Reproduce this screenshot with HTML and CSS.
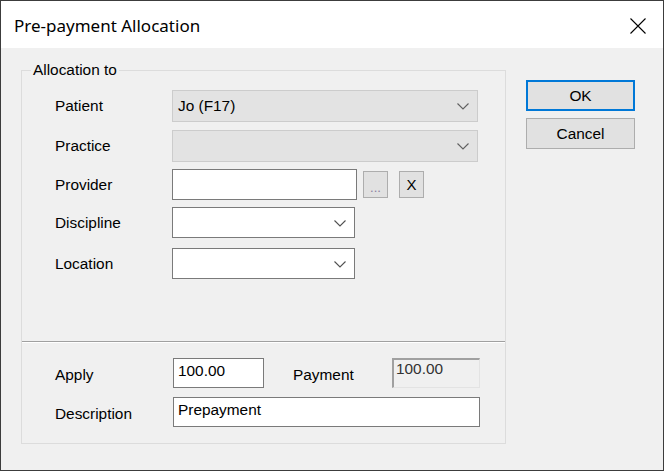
FILE: index.html
```html
<!DOCTYPE html>
<html>
<head>
<meta charset="utf-8">
<link rel="stylesheet" href="styles.css">
</head>
<body>
<div class="window">
  <div class="titlebar">
    <span class="title">Pre-payment Allocation</span>
    <span class="close">
      <svg width="16" height="16" viewBox="0 0 16 16"><path d="M0.5 0.5 L15.5 15.5 M15.5 0.5 L0.5 15.5" stroke="#000" stroke-width="1.1" fill="none"/></svg>
    </span>
  </div>
  <div class="client">
    <div class="group">
      <div class="legend">Allocation to</div>
      <div class="top">
        <div class="row r1">
          <span class="label">Patient</span>
          <div class="combo disabled wide"><span class="value">Jo (F17)</span><svg class="chev" width="12" height="7" viewBox="0 0 12 7"><polyline points="0.5,0.5 6,6 11.5,0.5" fill="none" stroke="#606060" stroke-width="1.1"/></svg></div>
        </div>
        <div class="row r2">
          <span class="label">Practice</span>
          <div class="combo disabled wide"><span class="value"></span><svg class="chev" width="12" height="7" viewBox="0 0 12 7"><polyline points="0.5,0.5 6,6 11.5,0.5" fill="none" stroke="#606060" stroke-width="1.1"/></svg></div>
        </div>
        <div class="row r3">
          <span class="label">Provider</span>
          <div class="textbox provider"></div>
          <span class="smallbtn dots">...</span>
          <span class="smallbtn clear">X</span>
        </div>
        <div class="row r4">
          <span class="label">Discipline</span>
          <div class="combo narrow"><span class="value"></span><svg class="chev" width="12" height="7" viewBox="0 0 12 7"><polyline points="0.5,0.5 6,6 11.5,0.5" fill="none" stroke="#505050" stroke-width="1.1"/></svg></div>
        </div>
        <div class="row r5">
          <span class="label">Location</span>
          <div class="combo narrow"><span class="value"></span><svg class="chev" width="12" height="7" viewBox="0 0 12 7"><polyline points="0.5,0.5 6,6 11.5,0.5" fill="none" stroke="#505050" stroke-width="1.1"/></svg></div>
        </div>
      </div>
      <div class="sep"></div>
      <div class="bottom">
        <div class="brow">
          <span class="label blabel">Apply</span>
          <div class="textbox apply">100.00</div>
          <span class="label plabel">Payment</span>
          <div class="readonly">100.00</div>
        </div>
        <div class="brow">
          <span class="label blabel">Description</span>
          <div class="textbox desc">Prepayment</div>
        </div>
      </div>
    </div>
    <div class="buttons">
      <div class="btn default">OK</div>
      <div class="btn">Cancel</div>
    </div>
  </div>
</div>
</body>
</html>
```
FILE: styles.css
```css
* { box-sizing: border-box; }
html, body { margin: 0; padding: 0; }
body {
  font-family: "Liberation Sans", Arial, sans-serif;
  font-size: 15.4px;
  color: #000;
  background: #f0f0f0;
}
.window {
  width: 664px;
  height: 471px;
  border: 1px solid #3c3c3c;
  background: #f0f0f0;
  display: flex;
  flex-direction: column;
}
.titlebar {
  height: 47px;
  background: #fff;
  display: flex;
  align-items: center;
  justify-content: space-between;
  padding: 0 17px 0 13px;
  flex-shrink: 0;
}
.title {
  font-family: "Noto Sans", "Open Sans", sans-serif;
  font-size: 17px;
  color: #000;
  margin-top: 1px;
}
.close { display: flex; margin-top: 2px; }
.client {
  display: flex;
  padding: 22px 0 0 20px;
  gap: 20px;
}
.group {
  position: relative;
  width: 485px;
  height: 374px;
  border: 1px solid #dcdcdc;
  display: flex;
  flex-direction: column;
}
.legend {
  position: absolute;
  top: -10px;
  left: 9px;
  padding: 0 2px;
  background: #f0f0f0;
  line-height: 18px;
}
.top {
  height: 270px;
  padding: 19px 0 0 33px;
}
.row {
  display: flex;
  align-items: center;
}
.r1 { height: 32px; margin-bottom: 8px; }
.r2 { height: 32px; margin-bottom: 7px; }
.r3 { height: 31px; margin-bottom: 7px; }
.r4 { height: 31px; margin-bottom: 10px; }
.r5 { height: 31px; }
.label {
  width: 117px;
  flex-shrink: 0;
}
.combo {
  height: 100%;
  display: flex;
  align-items: center;
  justify-content: space-between;
  padding: 0 8px 0 5px;
  background: #fff;
  border: 1px solid #7a7a7a;
}
.combo.disabled {
  background: #e3e3e3;
  border-color: #cccccc;
}
.combo.wide { width: 306px; }
.combo.narrow { width: 183px; }
.chev { flex-shrink: 0; margin-top: 1px; }
.textbox {
  height: 100%;
  background: #fff;
  border: 1px solid #7a7a7a;
  padding: 0 4px;
  display: flex;
  align-items: center;
}
.provider { width: 185px; }
.smallbtn {
  width: 25px;
  height: 27px;
  background: #e1e1e1;
  border: 1px solid #adadad;
  display: flex;
  align-items: center;
  justify-content: center;
}
.dots { margin-left: 6px; color: #8a7fa0; font-size: 13px; padding-top: 6px; }
.clear { margin-left: 11px; font-size: 15px; }
.sep {
  height: 2px;
  border-top: 1px solid #a0a0a0;
  border-bottom: 1px solid #ffffff;
}
.bottom {
  padding: 15px 0 0 33px;
  display: flex;
  flex-direction: column;
  gap: 9px;
}
.brow {
  display: flex;
  align-items: center;
  height: 30px;
}
.blabel { width: 118px; padding-top: 4px; }
.apply {
  width: 91px;
  align-items: flex-start;
  padding-top: 3px;
}
.plabel { width: 99px; margin-left: 29px; padding-top: 4px; }
.readonly {
  width: 88px;
  height: 30px;
  border-top: 2px solid #a0a0a0;
  border-left: 2px solid #a0a0a0;
  border-right: 1px solid #e3e3e3;
  border-bottom: 1px solid #e3e3e3;
  padding: 0 2px;
  line-height: 17px;
  color: #333;
}
.desc {
  width: 307px;
  align-items: flex-start;
  padding-top: 3px;
}
.buttons {
  display: flex;
  flex-direction: column;
  gap: 7px;
  margin-top: 10px;
}
.btn {
  width: 109px;
  height: 31px;
  background: #e1e1e1;
  border: 1px solid #adadad;
  display: flex;
  align-items: center;
  justify-content: center;
}
.btn.default {
  border: 2px solid #0078d7;
}
```
